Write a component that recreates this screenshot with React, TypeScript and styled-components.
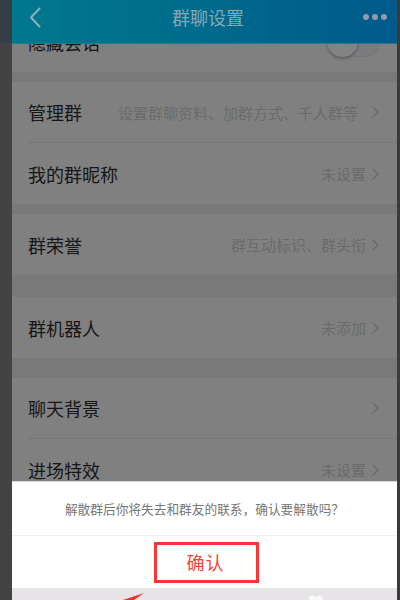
import React from "react";
import styled, { createGlobalStyle } from "styled-components";

const GlobalStyle = createGlobalStyle`
  html, body {
    margin: 0;
    padding: 0;
    background: #3c3c3c;
  }
  body {
    font-family: "Noto Sans CJK SC", "Noto Sans", sans-serif;
  }
`;

const Frame = styled.div`
  display: flex;
  width: 400px;
  height: 600px;
  overflow: hidden;
`;

const LeftEdge = styled.div`
  width: 12px;
  flex: none;
  background: linear-gradient(#343e44 0 43px, #434343 43px);
`;

const RightEdge = styled.div`
  width: 3px;
  flex: none;
  background: #3a3a3a;
`;

const Phone = styled.div`
  flex: 1;
  display: flex;
  flex-direction: column;
  min-width: 0;
`;

const Header = styled.header`
  height: 44px;
  flex: none;
  box-sizing: border-box;
  display: grid;
  grid-template-columns: 1fr auto 1fr;
  align-items: center;
  padding: 0 10px 9px 17px;
  background: linear-gradient(90deg, #00788e 0%, #006a8c 50%, #005a8a 100%);
  border-bottom: 1px solid #1b7c98;
`;

const Title = styled.div`
  font-size: 18px;
  line-height: 22px;
  color: #86a8b6;
`;

const Dots = styled.div`
  justify-self: end;
  display: flex;
  gap: 3px;
`;

const Dot = styled.span`
  width: 6px;
  height: 6px;
  border-radius: 50%;
  background: #8d9dab;
`;

const Content = styled.div`
  flex: 1;
  overflow: hidden;
  background: #797979;
`;

const List = styled.div`
  margin-top: -33px;
  display: flex;
  flex-direction: column;
`;

const Gap = styled.div<{ $h: number }>`
  height: ${(p) => p.$h}px;
  flex: none;
`;

const Row = styled.div`
  display: flex;
  padding-left: 16px;
  background: #808080;
`;

const RowInner = styled.div<{ $divider?: boolean }>`
  flex: 1;
  display: flex;
  align-items: center;
  justify-content: space-between;
  box-sizing: border-box;
  height: 61px;
  padding-right: 18px;
  border-bottom: ${(p) => (p.$divider ? "1px solid #767676" : "none")};
`;

const Label = styled.span`
  font-size: 18px;
  color: #161616;
`;

const Value = styled.span<{ $space?: number }>`
  display: flex;
  align-items: center;
  font-size: 15px;
  color: #6b6b6b;
  gap: ${(p) => p.$space ?? 6}px;
`;

const Switch = styled.div`
  position: relative;
  width: 53px;
  height: 31px;
  margin-right: -1px;
  border-radius: 16px;
  background: #7b7b80;
  box-shadow: inset 0 0 0 1px #777;
`;

const Knob = styled.span`
  position: absolute;
  left: 0;
  top: 0;
  width: 31px;
  height: 31px;
  border-radius: 50%;
  background: #838383;
  box-shadow: 0 2px 3px rgba(0, 0, 0, 0.25);
`;

const Sheet = styled.div`
  flex: none;
  display: flex;
  flex-direction: column;
  background: #fff;
  border-top: 1px solid #d6d6d6;
`;

const Message = styled.div`
  height: 53px;
  display: flex;
  align-items: center;
  justify-content: center;
  font-size: 12.7px;
  color: #777;
  border-bottom: 1px solid #efefef;
`;

const ConfirmArea = styled.div`
  height: 52px;
  display: flex;
  align-items: center;
  justify-content: center;
  padding-left: 4px;
`;

const ConfirmBox = styled.div`
  width: 105px;
  height: 41px;
  box-sizing: border-box;
  border: 3px solid #ff3434;
  display: flex;
  align-items: center;
  justify-content: center;
  font-size: 18px;
  color: #f2453b;
  letter-spacing: 1px;
  padding-right: 2px;
`;

const BottomStrip = styled.div`
  position: relative;
  height: 12px;
  background: #e6e4e6;
  overflow: hidden;
`;

const Arrow = styled.svg`
  position: absolute;
  left: 111px;
  top: 5px;
`;

const Blobs = styled.svg`
  position: absolute;
  left: 296px;
  top: 7px;
`;

function Chevron({ color = "#6b6b6b" }: { color?: string }) {
  return (
    <svg width="7" height="12" viewBox="0 0 7 12">
      <path
        d="M1 1 L6 6 L1 11"
        fill="none"
        stroke={color}
        strokeWidth="1.4"
        strokeLinecap="round"
        strokeLinejoin="round"
      />
    </svg>
  );
}

type Item = {
  label: string;
  value?: string;
  space?: number;
  divider?: boolean;
};

const sections: { gap: number; items: Item[] }[] = [
  {
    gap: 10,
    items: [
      { label: "管理群", value: "设置群聊资料、加群方式、千人群等", space: 14, divider: true },
      { label: "我的群昵称", value: "未设置" },
    ],
  },
  { gap: 10, items: [{ label: "群荣誉", value: "群互动标识、群头衔" }] },
  { gap: 22, items: [{ label: "群机器人", value: "未添加" }] },
  {
    gap: 20,
    items: [
      { label: "聊天背景", divider: true },
      { label: "进场特效", value: "未设置" },
    ],
  },
];

export default function App() {
  return (
    <>
      <GlobalStyle />
      <Frame>
        <LeftEdge />
        <Phone>
          <Header>
            <svg width="12" height="21" viewBox="0 0 12 21">
              <path
                d="M10.5 1.5 L2 10.5 L10.5 19.5"
                fill="none"
                stroke="#8cb0bc"
                strokeWidth="2"
                strokeLinecap="round"
                strokeLinejoin="round"
              />
            </svg>
            <Title>群聊设置</Title>
            <Dots>
              <Dot />
              <Dot />
              <Dot />
            </Dots>
          </Header>

          <Content>
            <List>
              <Row>
                <RowInner>
                  <Label>隐藏会话</Label>
                  <Switch>
                    <Knob />
                  </Switch>
                </RowInner>
              </Row>
              {sections.map((s, i) => (
                <React.Fragment key={i}>
                  <Gap $h={s.gap} />
                  {s.items.map((it) => (
                    <Row key={it.label}>
                      <RowInner $divider={it.divider}>
                        <Label>{it.label}</Label>
                        <Value $space={it.space}>
                          {it.value}
                          <Chevron />
                        </Value>
                      </RowInner>
                    </Row>
                  ))}
                </React.Fragment>
              ))}
            </List>
          </Content>

          <Sheet>
            <Message>解散群后你将失去和群友的联系，确认要解散吗？</Message>
            <ConfirmArea>
              <ConfirmBox>确认</ConfirmBox>
            </ConfirmArea>
            <BottomStrip>
              <Arrow width="21" height="7" viewBox="0 0 21 7">
                <polygon points="21,0 0,7 11,7" fill="#f2302a" />
              </Arrow>
              <Blobs width="16" height="5" viewBox="0 0 16 5">
                <circle cx="4" cy="4" r="3.5" fill="#fafafa" />
                <circle cx="11" cy="4" r="3.5" fill="#fafafa" />
              </Blobs>
            </BottomStrip>
          </Sheet>
        </Phone>
        <RightEdge />
      </Frame>
    </>
  );
}
